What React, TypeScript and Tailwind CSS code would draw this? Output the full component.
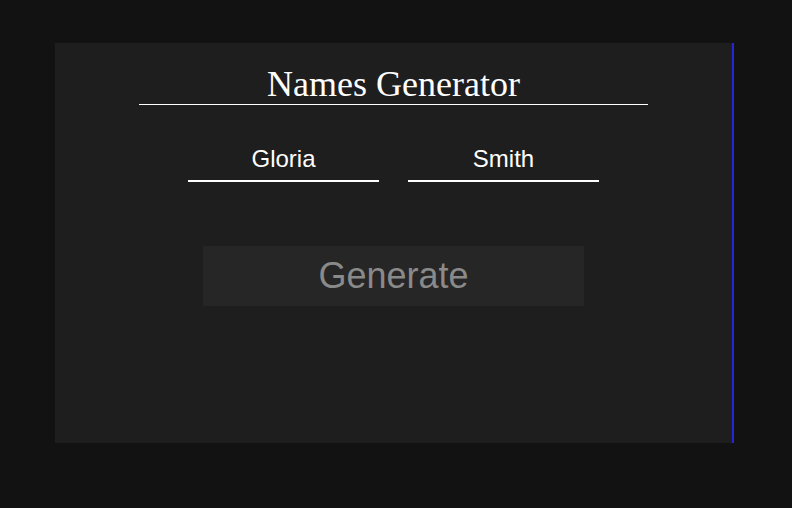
import React from "react";

export default function App() {
  return (
    <div className="w-[792px] h-[508px] bg-[#121212] pt-[43px] pl-[55px]">
      <div className="w-[679px] h-[400px] bg-[#1e1e1e] border-r-2 border-[#2626d9] flex flex-col items-center">
        <h1 className="mt-[21px] w-[509px] border-b border-white text-center text-white text-[36px] leading-[40px] font-['Liberation_Serif',serif]">
          Names Generator
        </h1>
        <div className="mt-[33px] flex gap-[29px]">
          <input
            defaultValue="Gloria"
            className="w-[191px] h-[44px] bg-transparent border-b-2 border-white text-center text-white text-[24px] outline-none font-['Liberation_Sans',sans-serif]"
          />
          <input
            defaultValue="Smith"
            className="w-[191px] h-[44px] bg-transparent border-b-2 border-white text-center text-white text-[24px] outline-none font-['Liberation_Sans',sans-serif]"
          />
        </div>
        <button className="mt-[64px] w-[381px] h-[60px] bg-[#262626] text-[#8a8a8a] text-[36px] font-['Liberation_Sans',sans-serif]">
          Generate
        </button>
      </div>
    </div>
  );
}
